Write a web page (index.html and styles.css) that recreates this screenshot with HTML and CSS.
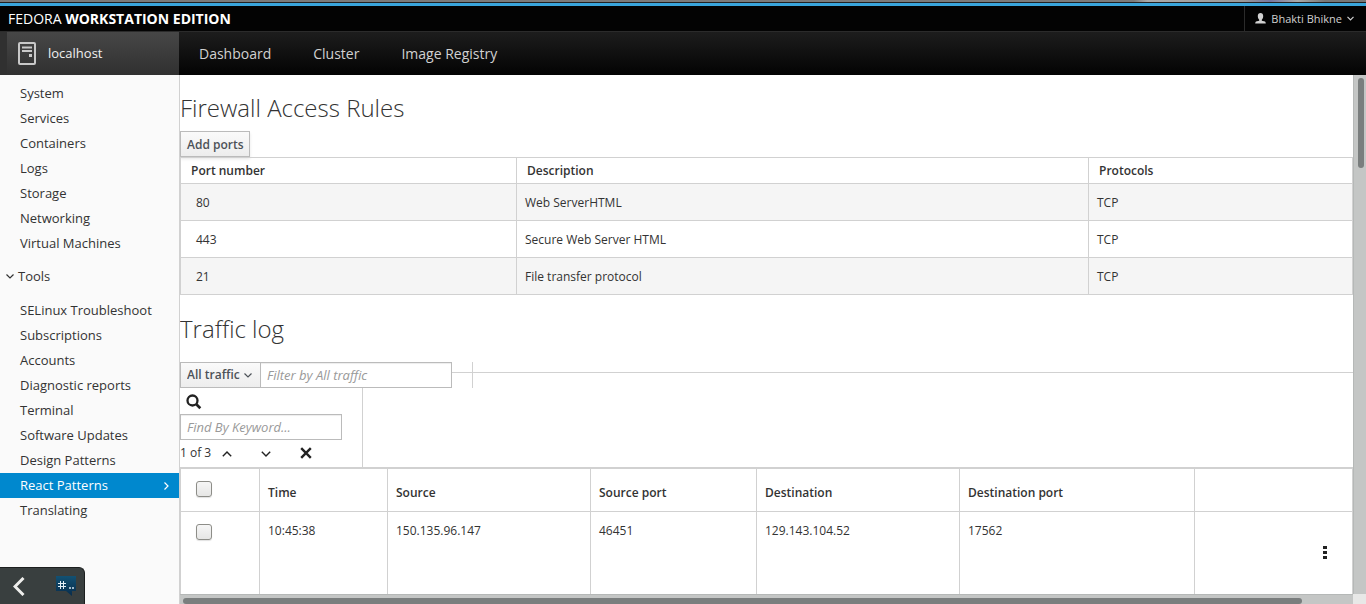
FILE: index.html
```html
<!DOCTYPE html>
<html lang="en">
<head>
<meta charset="utf-8">
<title>React Patterns - localhost</title>
<link rel="stylesheet" href="styles.css">
</head>
<body>
<div class="desktop-strip"></div>
<header class="masthead">
  <div class="brand">FEDORA <strong>WORKSTATION EDITION</strong></div>
  <button class="user-menu" type="button">
    <svg width="11" height="11" viewBox="0 0 11 11" fill="#d1d1d1"><path d="M5.500 0C7.200 0 8.200 1.100 8.200 3 8.200 4.600 7.600 6 6.800 6.700V7.800L10 8.600Q10.700 9 10.800 10.500H.2Q.3 9 1 8.600L4.200 7.800V6.700C3.400 6 2.800 4.600 2.800 3 2.800 1.100 3.800 0 5.500 0Z"/></svg>
    <span>Bhakti Bhikne</span>
    <svg width="7" height="5" viewBox="0 0 7 5" fill="none" stroke="#d1d1d1" stroke-width="1.200"><path d="M.5.8 3.500 3.800 6.500.8"/></svg>
  </button>
</header>
<nav class="navbar">
  <a class="host" href="#">
    <svg width="18" height="23" viewBox="0 0 18 23" fill="none" stroke="#c8c8c8"><rect x="1" y="1" width="16" height="21" rx="1" stroke-width="2"/><path d="M4 5.500h10M4 9h10" stroke-width="2"/><path d="M11 13.500h3" stroke-width="3"/></svg>
    <span>localhost</span>
  </a>
  <a href="#">Dashboard</a>
  <a href="#">Cluster</a>
  <a href="#">Image Registry</a>
</nav>
<div class="workspace">
  <aside class="sidebar">
    <a href="#">System</a>
    <a href="#">Services</a>
    <a href="#">Containers</a>
    <a href="#">Logs</a>
    <a href="#">Storage</a>
    <a href="#">Networking</a>
    <a href="#">Virtual Machines</a>
    <button class="tools" type="button"><svg width="8" height="5" viewBox="0 0 8 5" fill="none" stroke="#333" stroke-width="1.200"><path d="M.5.5 4 4 7.500.5"/></svg>Tools</button>
    <a href="#">SELinux Troubleshoot</a>
    <a href="#">Subscriptions</a>
    <a href="#">Accounts</a>
    <a href="#">Diagnostic reports</a>
    <a href="#">Terminal</a>
    <a href="#">Software Updates</a>
    <a href="#">Design Patterns</a>
    <a class="active" href="#"><span>React Patterns</span><svg width="5" height="8" viewBox="0 0 5 8" fill="none" stroke="#fff" stroke-width="1.200"><path d="M.5.5 4 4 .5 7.500"/></svg></a>
    <a href="#">Translating</a>
  </aside>
  <main class="content">
    <h2>Firewall Access Rules</h2>
    <button class="btn" type="button">Add ports</button>
    <table class="rules">
      <colgroup><col class="c-port"><col><col class="c-proto"></colgroup>
      <thead><tr><th>Port number</th><th>Description</th><th>Protocols</th></tr></thead>
      <tbody>
        <tr><td>80</td><td>Web ServerHTML</td><td>TCP</td></tr>
        <tr><td>443</td><td>Secure Web Server HTML</td><td>TCP</td></tr>
        <tr><td>21</td><td>File transfer protocol</td><td>TCP</td></tr>
      </tbody>
    </table>
    <h2 class="log-title">Traffic log</h2>
    <div class="toolbar">
      <div class="select-wrap">
        <select aria-label="Traffic type"><option>All traffic</option></select>
        <svg class="caret" width="8" height="5" viewBox="0 0 8 5" fill="none" stroke="#4d5258" stroke-width="1.200"><path d="M.5.500 4 4 7.500.500"/></svg>
      </div>
      <input class="field filter" type="text" placeholder="Filter by All traffic" aria-label="Filter by All traffic">
      <div class="rule rule-start"></div>
      <div class="rule rule-end"></div>
    </div>
    <div class="find">
      <button class="icon-btn search" type="button" aria-label="Search"><svg width="16" height="16" viewBox="0 0 16 16" fill="none" stroke="#222"><circle cx="6.500" cy="6.500" r="5" stroke-width="2.300"/><path d="M10.300 10.300 14.300 14.300" stroke-width="2.700"/></svg></button>
      <input class="field keyword" type="text" placeholder="Find By Keyword..." aria-label="Find By Keyword">
      <div class="find-nav">
        <span class="count">1 of 3</span>
        <button class="icon-btn" type="button" aria-label="Previous"><svg width="10" height="6" viewBox="0 0 10 6" fill="none" stroke="#222" stroke-width="1.400"><path d="M.8 5.300 5 1.100 9.200 5.300"/></svg></button>
        <button class="icon-btn" type="button" aria-label="Next"><svg width="10" height="6" viewBox="0 0 10 6" fill="none" stroke="#222" stroke-width="1.400"><path d="M.8.700 5 4.900 9.200.700"/></svg></button>
        <button class="icon-btn" type="button" aria-label="Close"><svg width="12" height="12" viewBox="0 0 12 12" fill="none" stroke="#222" stroke-width="2.400"><path d="M1.200 1.200 10.800 10.800M10.800 1.200 1.200 10.800"/></svg></button>
      </div>
    </div>
    <table class="log">
      <colgroup><col class="c-check"><col class="c-time"><col class="c-addr"><col class="c-sport"><col class="c-addr"><col class="c-dport"><col></colgroup>
      <thead><tr><th><input type="checkbox" aria-label="Select all"></th><th>Time</th><th>Source</th><th>Source port</th><th>Destination</th><th>Destination port</th><th></th></tr></thead>
      <tbody><tr><td><input type="checkbox" aria-label="Select row"></td><td>10:45:38</td><td>150.135.96.147</td><td>46451</td><td>129.143.104.52</td><td>17562</td>
        <td class="actions"><button class="icon-btn" type="button" aria-label="Actions"><svg width="4" height="13" viewBox="0 0 4 13" fill="#222"><path d="M0 0h4v3H0zM0 5h4v3H0zM0 10h4v3H0z"/></svg></button></td></tr></tbody>
    </table>
  </main>
  <div class="scroll-y"><div class="thumb"></div></div>
  <div class="scroll-x"><div class="thumb"></div></div>
  <div class="corner"></div>
</div>
<div class="tray">
  <button class="icon-btn" type="button" aria-label="Collapse tray"><svg width="12" height="19" viewBox="0 0 12 19" fill="none" stroke="#eeeeec" stroke-width="3"><path d="M10.500 1 2 9.500 10.500 18"/></svg></button>
  <button class="icon-btn" type="button" aria-label="Chat"><svg width="20" height="20" viewBox="0 0 20 20"><defs><linearGradient id="chat" x2="0" y2="1"><stop stop-color="#125173"/><stop offset="1" stop-color="#082c4b"/></linearGradient></defs><path fill="url(#chat)" d="M0 0h20v15h-4v5l-6-5H0z"/><path d="M4.500 5v8M7.500 5v8M2 7.500h8M2 10.500h8" stroke="#e4eef5"/><path d="M13 11h2v2h-2zM16 11h2v2h-2z" fill="#9fb8ca"/></svg></button>
</div>
</body>
</html>
```

FILE: styles.css
```css
* { box-sizing: border-box; }
body {
  margin: 0;
  height: 100vh;
  display: flex;
  flex-direction: column;
  overflow: hidden;
  font: 12px/17px "Open Sans", sans-serif;
  color: #333;
  background: #fff;
}
a { color: inherit; text-decoration: none; }
button, input, select { font: inherit; color: inherit; margin: 0; }
svg { display: block; flex: none; }

.desktop-strip {
  flex: none;
  height: 6px;
  border-bottom: 3px solid #39a5dc;
  background: linear-gradient(transparent 2px, #222 2px), linear-gradient(90deg, #7b7b7b 83%, #aaa 84%, #999 91%, #7777a0 93%, #aaa 95%, #777 97%);
}
.masthead {
  flex: none;
  height: 25px;
  display: flex;
  justify-content: space-between;
  background: #030303;
  color: #fff;
}
.brand { padding-left: 8px; font-size: 14px; line-height: 26px; }
.brand strong { font-weight: 700; }
.user-menu {
  display: flex;
  align-items: center;
  gap: 5px;
  padding: 0 12px 0 10px;
  border: 0;
  border-left: 1px solid #2b2b2b;
  background: none;
  color: #d1d1d1;
  font-size: 11px;
}
.navbar {
  flex: none;
  height: 44px;
  display: flex;
  border-top: 1px solid #2b2b2b;
  background: linear-gradient(#1d1d1d, #030303);
  color: #d1d1d1;
  font-size: 14px;
  line-height: 44px;
}
.navbar a { padding: 0 22px 0 20px; }
.navbar .host {
  width: 179px;
  display: flex;
  align-items: center;
  gap: 12px;
  padding: 0 18px;
  background: linear-gradient(90deg, #303030 7px, transparent 7px), linear-gradient(#474747, #303030);
  color: #f0f0f0;
  font-size: 13px;
  line-height: 42px;
}
.host span { padding-bottom: 2px; }

.workspace {
  flex: 1;
  min-height: 0;
  display: grid;
  grid-template: minmax(0, 1fr) 10px / 180px minmax(0, 1fr) 13px;
}
.sidebar {
  grid-row: span 2;
  padding-top: 6px;
  border-right: 1px solid #d1d1d1;
  background: #fafafa;
  font-size: 13px;
  line-height: 25px;
}
.sidebar a {
  display: flex;
  align-items: center;
  justify-content: space-between;
  padding: 0 10px 0 20px;
}
.sidebar .active { background: #0088ce; color: #fff; }
.tools {
  display: flex;
  align-items: center;
  gap: 4px;
  margin: 8px 0 9px;
  padding: 0 6px;
  border: 0;
  background: none;
}

.content { overflow: hidden; }
h2 { margin: 20px 0 10px; font-size: 24px; font-weight: 300; line-height: 26px; }
.log-title { margin: 21px 0 20px; }
.btn {
  display: block;
  height: 26px;
  padding: 0 5px 0 6px;
  border: 1px solid #bbb;
  background: linear-gradient(#fafafa, #ededed);
  box-shadow: 0 2px 3px rgba(3, 3, 3, 0.1);
  color: #4d5258;
  font-weight: 600;
}
table { width: 100%; border-collapse: collapse; table-layout: fixed; }
th, td { border: 1px solid #d1d1d1; text-align: left; }
th { font-weight: 600; }
.rules th { height: 26px; padding: 0 10px; }
.rules td { height: 37px; padding: 0 8px; }
.rules td:first-child { padding-left: 15px; }
.rules tbody tr:nth-child(odd) { background: #f5f5f5; }
.c-port { width: 336px; }
.c-proto { width: 264px; }

.toolbar { display: flex; height: 26px; }
.select-wrap { position: relative; width: 81px; }
select {
  appearance: none;
  width: 100%;
  height: 26px;
  padding: 0 6px 2px;
  border: 1px solid #bbb;
  border-radius: 0;
  background: linear-gradient(#fafafa, #ededed);
  color: #4d5258;
  font-weight: 600;
}
.caret { position: absolute; right: 9px; top: 11px; pointer-events: none; }
.field {
  height: 26px;
  padding: 0 6px;
  border: 1px solid #bbb;
  background: #fff;
  box-shadow: inset 0 1px 1px rgba(3, 3, 3, 0.075);
  font-size: 13px;
}
.field::placeholder { color: #999; font-style: italic; opacity: 1; }
.filter { width: 191px; border-left: 0; }
.rule::before { content: ""; display: block; margin-top: 10px; border-top: 1px solid #d1d1d1; }
.rule-start { width: 21px; border-right: 1px solid #d1d1d1; }
.rule-end { flex: 1; }
.find { width: 183px; height: 79px; border-right: 1px solid #d1d1d1; }
.icon-btn { padding: 0; border: 0; background: none; }
.search { display: block; padding: 6px 6px 4px; }
.keyword { display: block; width: 162px; }
.find-nav { display: flex; align-items: center; height: 26px; }
.find-nav .count { width: 42px; padding-bottom: 2px; }
.find-nav .icon-btn { width: 10px; margin-right: 29px; padding-top: 2px; }
.find-nav .icon-btn:last-child { width: 12px; margin: 0; padding: 0; }

.log { border-top: 2px solid #d1d1d1; }
.log th { height: 43px; padding: 6px 8px 0; }
.log td { height: 84px; padding: 10px 8px; vertical-align: top; }
.log th:first-child { padding: 0 15px 2px; }
.log td:first-child { padding: 12px 15px; }
.log .actions { padding: 9px 25px 11px 8px; vertical-align: middle; }
.actions .icon-btn { display: block; margin-left: auto; }
.c-check { width: 79px; }
.c-time { width: 128px; }
.c-addr { width: 203px; }
.c-sport { width: 166px; }
.c-dport { width: 235px; }
input[type="checkbox"] {
  appearance: none;
  display: block;
  width: 16px;
  height: 16px;
  border: 1px solid #8d8d88;
  border-radius: 3px;
  background: linear-gradient(#f6f6f6, #e6e6e5);
  box-shadow: 0 1px 1px rgba(0, 0, 0, 0.12);
}

.scroll-y { padding: 3px 3px 0 4px; border-left: 1px solid #b5b8b7; background: #c4c6c5; }
.scroll-y .thumb { width: 6px; height: 90px; border-radius: 3px; background: #7a7e7e; }
.scroll-x { grid-column: 2; padding: 3px 51px 0 3px; border-top: 1px solid #b5b8b7; background: #c4c6c5; }
.scroll-x .thumb { height: 6px; border-radius: 3px; background: #7a7e7e; }
.corner { background: #e8e8e7; }

.tray {
  position: fixed;
  left: 0;
  bottom: 0;
  width: 85px;
  height: 37px;
  display: flex;
  align-items: center;
  justify-content: space-between;
  padding: 0 8px 0 13px;
  border: 1px solid #1c1f1f;
  border-width: 1px 1px 0 0;
  border-radius: 0 6px 0 0;
  background: #393f3f;
}
```
